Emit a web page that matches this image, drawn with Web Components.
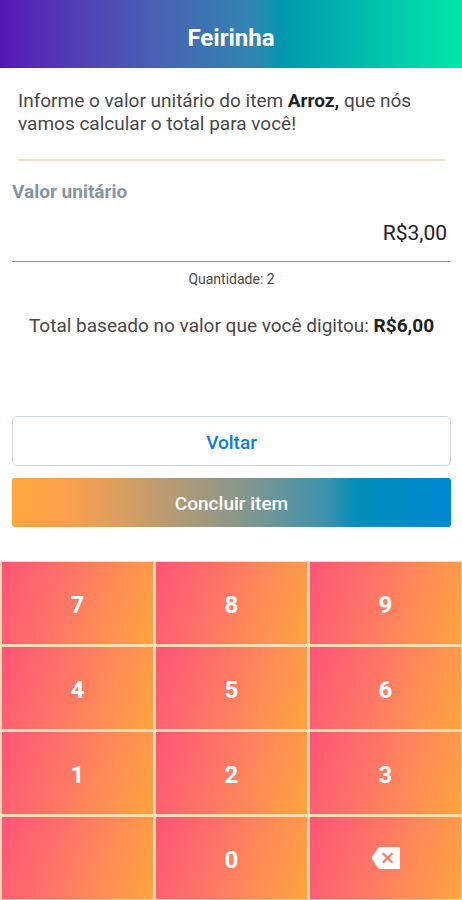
<!DOCTYPE html>
<html lang="pt-BR">
<head>
<meta charset="utf-8">
<meta name="viewport" content="width=device-width, initial-scale=1">
<title>Feirinha</title>
<style>
  body { margin: 0; background: #fff; color: #484848; font-family: Roboto, "Liberation Sans", sans-serif; }
</style>
</head>
<body>
<feirinha-page></feirinha-page>

<template id="page-template">
  <style>
    :host { display: flex; flex-direction: column; min-height: 100vh; }
    main { display: flex; flex-direction: column; padding: 0 11px 0 12px; }
    .intro { margin: 0 6px; padding: 21px 0 24px; border-bottom: 2px solid #ffdfc4; font-size: 19px; line-height: 23px; }
    b { font-weight: 700; color: #222; }
    money-field { margin-top: 19px; }
    .quantity { margin: 8px 0 0; text-align: center; font-size: 14px; line-height: 18px; }
    .total { margin: 26px 0 0; text-align: center; font-size: 19px; line-height: 24px; }
    .actions { display: flex; flex-direction: column; gap: 12px; margin: 78px 0 34px; }
    key-pad { margin-top: auto; }
  </style>
  <app-header>Feirinha</app-header>
  <main>
    <p class="intro">Informe o valor unitário do item <b>Arroz,</b> que nós vamos calcular o total para você!</p>
    <money-field label="Valor unitário" value="R$3,00"></money-field>
    <p class="quantity">Quantidade: 2</p>
    <p class="total">Total baseado no valor que você digitou: <b>R$6,00</b></p>
    <div class="actions">
      <action-button variant="outline">Voltar</action-button>
      <action-button variant="filled">Concluir item</action-button>
    </div>
  </main>
  <key-pad></key-pad>
</template>

<template id="header-template">
  <style>
    :host { display: block; background: linear-gradient(90deg, #5517b8 0%, #5430b5 10%, #4a60b4 33%, #2f86b2 55%, #0098b0 61%, #00e8a8 100%); }
    h1 { margin: 0; padding: 26px 0 18px; text-align: center; color: #fff; font-size: 24px; line-height: 24px; font-weight: 700; }
  </style>
  <header><h1><slot></slot></h1></header>
</template>

<template id="money-template">
  <style>
    :host { display: flex; flex-direction: column; }
    label { font-size: 19px; line-height: 24px; font-weight: 700; color: #8496a0; }
    input { box-sizing: border-box; width: 100%; height: 58px; margin: 0; padding: 0 4px; border: 0; border-bottom: 1px solid #8a9094; outline: 0; border-radius: 0; background: none; color: #222; font: 400 21px Roboto, "Liberation Sans", sans-serif; text-align: right; }
  </style>
  <label for="amount"></label>
  <input id="amount" type="text" inputmode="none">
</template>

<template id="action-template">
  <style>
    :host { display: block; }
    button { display: block; box-sizing: border-box; width: 100%; height: 50px; margin: 0; padding: 2px 16px 0; border: 0; border-radius: 3px; font: 500 19px Roboto, "Liberation Sans", sans-serif; cursor: pointer; }
    :host([variant="outline"]) button { border: 1px solid #c8d6ee; border-radius: 5px; background: #fff; color: #0b7fd0; }
    :host([variant="filled"]) button { height: 49px; color: #fff; background: linear-gradient(90deg, #ffa63c 0%, #ffa04c 12%, #88978c 52%, #3a92ae 72%, #0090b8 78%, #0088d4 100%); }
  </style>
  <button type="button"><slot></slot></button>
</template>

<template id="keypad-template">
  <style>
    :host { display: grid; grid-template-columns: repeat(3, 1fr); gap: 3px; padding: 1px 1px 1px 2px; background: #ffdcb4; }
  </style>
</template>

<template id="key-template">
  <style>
    :host { display: block; }
    button { display: flex; align-items: center; justify-content: center; box-sizing: border-box; width: 100%; height: 82px; margin: 0; padding: 3px 0 0; border: 0; border-radius: 0; background: linear-gradient(108deg, #ff5478 0%, #ff7864 45%, #ff9450 78%, #ffa43c 100%); color: #fff; font: 700 24px Roboto, "Liberation Sans", sans-serif; cursor: pointer; }
    :host([icon]) button { padding: 0; }
    ::slotted(svg) { display: block; width: 30px; height: 22px; }
  </style>
  <button type="button"><slot></slot></button>
</template>

<script>
  const stamp = (host, id) => {
    const root = host.attachShadow({ mode: "open" });
    root.append(document.getElementById(id).content.cloneNode(true));
    return root;
  };

  customElements.define("app-header", class extends HTMLElement {
    constructor() { super(); stamp(this, "header-template"); }
  });

  customElements.define("money-field", class extends HTMLElement {
    constructor() { super(); stamp(this, "money-template"); }
    connectedCallback() {
      this.shadowRoot.querySelector("label").textContent = this.getAttribute("label");
      this.shadowRoot.querySelector("input").value = this.getAttribute("value");
    }
  });

  customElements.define("action-button", class extends HTMLElement {
    constructor() { super(); stamp(this, "action-template"); }
  });

  customElements.define("pad-key", class extends HTMLElement {
    constructor() { super(); stamp(this, "key-template"); }
    connectedCallback() {
      const name = this.getAttribute("label");
      if (name) this.shadowRoot.querySelector("button").setAttribute("aria-label", name);
    }
  });

  customElements.define("key-pad", class extends HTMLElement {
    constructor() {
      super();
      const root = stamp(this, "keypad-template");
      for (const digit of ["7", "8", "9", "4", "5", "6", "1", "2", "3", "", "0"]) {
        const key = document.createElement("pad-key");
        key.textContent = digit;
        if (!digit) key.setAttribute("label", "Vazio");
        root.append(key);
      }
      const erase = document.createElement("pad-key");
      erase.setAttribute("label", "Apagar");
      erase.setAttribute("icon", "");
      erase.innerHTML = `<svg viewBox="0 0 30 22" aria-hidden="true">
        <path fill="#fff" fill-rule="evenodd" d="M9 0H28Q29 0 29 1V21Q29 22 28 22H9Q7.800 22 7 21L1 12Q.5 11 1 10L7 1Q7.800 0 9 0ZM12.600 5.400L11 7L15 11L11 15L12.600 16.600L16.600 12.600L20.600 16.600L22.200 15L18.200 11L22.200 7L20.600 5.400L16.600 9.400Z"/>
      </svg>`;
      root.append(erase);
    }
  });

  customElements.define("feirinha-page", class extends HTMLElement {
    constructor() { super(); stamp(this, "page-template"); }
  });
</script>
</body>
</html>
